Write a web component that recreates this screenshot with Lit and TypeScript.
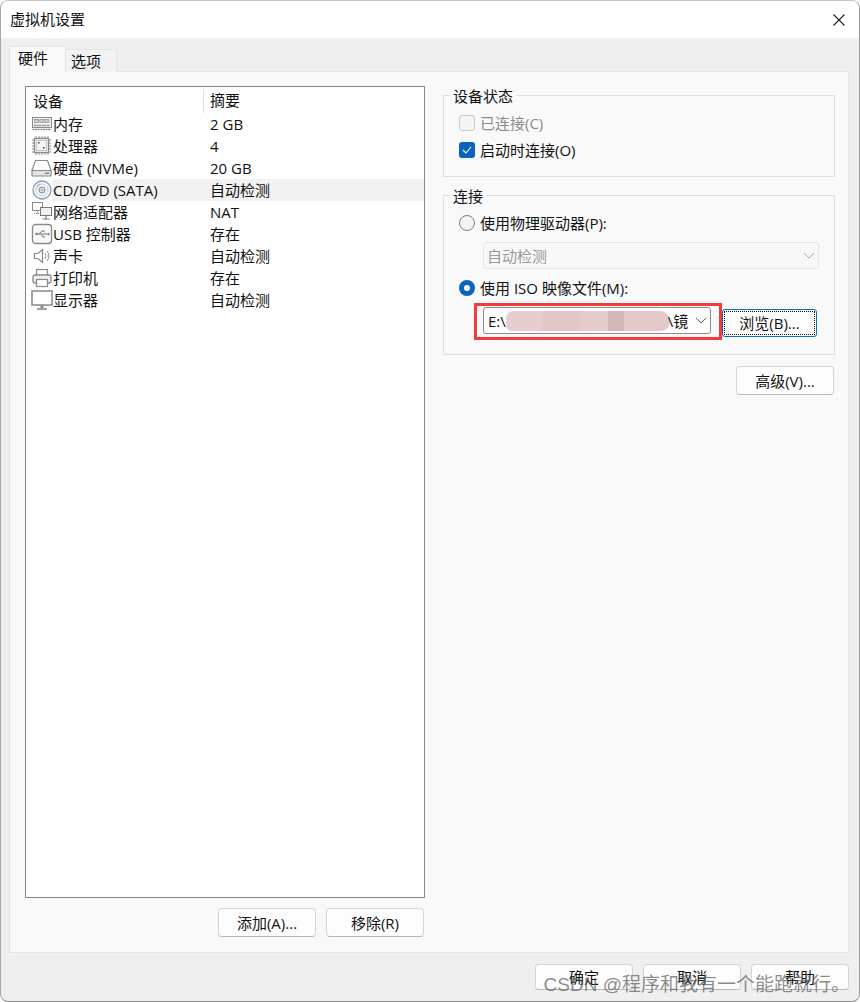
import { LitElement, html, css, svg } from "lit";
import { customElement } from "lit/decorators.js";

const G = "#8a8a8a";
const icons: Record<string, unknown> = {
  mem: svg`<rect x="1.5" y="4.5" width="19" height="10" fill="#f4f4f4" stroke="${G}"/><rect x="3.5" y="6.5" width="4" height="3" fill="#d0d0d0" stroke="${G}" stroke-width=".7"/><rect x="8.8" y="6.5" width="4" height="3" fill="#d0d0d0" stroke="${G}" stroke-width=".7"/><rect x="14" y="6.5" width="4" height="3" fill="#d0d0d0" stroke="${G}" stroke-width=".7"/><path d="M3 12.5h16M1.5 16.5h19" stroke="${G}" stroke-width="1.4" stroke-dasharray="2 .6"/>`,
  cpu: svg`<rect x="3.5" y="3.5" width="14" height="14" fill="#fff" stroke="${G}" stroke-width="1.4"/><rect x="5.5" y="5.5" width="10" height="10" fill="#f4f4f4" stroke="#c4c4c4"/><path d="M1 5h2M1 8h2M1 11h2M1 14h2M1 17h2M18 5h2M18 8h2M18 11h2M18 14h2M18 17h2M5 1v2M8 1v2M11 1v2M14 1v2M17 1v2M5 18v2M8 18v2M11 18v2M14 18v2M17 18v2" stroke="${G}"/><rect x="7" y="7" width="1.6" height="1.6" fill="#555"/><rect x="12" y="12" width="1.6" height="1.6" fill="#555"/>`,
  hdd: svg`<path d="M4.5 3.5h12l3.5 10H1z" fill="#fff" stroke="${G}" stroke-width="1.2"/><rect x="1" y="13.5" width="19" height="5.5" rx=".8" fill="#e4e4e4" stroke="${G}" stroke-width="1.2"/><path d="M14 16.2h4" stroke="#555"/>`,
  cd: svg`<circle cx="11" cy="11" r="9" fill="#f2f5f8" stroke="#7f9db5" stroke-width="1.3"/><circle cx="11" cy="11" r="6" fill="none" stroke="#c5d2dc"/><circle cx="11" cy="11" r="3" fill="#dde4ea" stroke="${G}"/><circle cx="11" cy="11" r="1" fill="#fff" stroke="${G}" stroke-width=".6"/><path d="M6 8a6 6 0 0 1 3-3" stroke="#7f9db5" fill="none"/>`,
  net: svg`<rect x="1.5" y="1.5" width="10" height="8" fill="#fff" stroke="${G}"/><path d="M6.5 9.5v3M3 12.5h6" stroke="${G}" stroke-dasharray="1.2 .8"/><rect x="9.5" y="6.5" width="11" height="8" fill="#f1f1f1" stroke="#777"/><path d="M15 14.5v3M11.5 18h7" stroke="#777" stroke-width="1.2"/>`,
  usb: svg`<rect x="1.5" y="1.5" width="19" height="19" rx="3" fill="#f8f8f8" stroke="${G}" stroke-width="1.3"/><path d="M5 11h12M8 11l3-3h3M10 11l2 3h2" fill="none" stroke="#777"/><path d="M17 9.5l2 1.5-2 1.5z" fill="#777"/><circle cx="5.5" cy="11" r="1.2" fill="#777"/>`,
  snd: svg`<path d="M3.5 8.5h3.5l4.5-4v13l-4.5-4H3.5z" fill="#fff" stroke="${G}" stroke-width="1.2"/><path d="M14 8a4.5 4.5 0 0 1 0 6M16 6a7.5 7.5 0 0 1 0 10" fill="none" stroke="${G}"/>`,
  prn: svg`<rect x="5.5" y="2.5" width="11" height="6" fill="#fff" stroke="${G}" stroke-width="1.2"/><rect x="2" y="8" width="18" height="8" rx="1.5" fill="#f0f0f0" stroke="${G}" stroke-width="1.3"/><rect x="5.5" y="12.5" width="11" height="7" fill="#fff" stroke="${G}" stroke-width="1.2"/>`,
  mon: svg`<rect x="1" y="2" width="20" height="14" fill="#fff" stroke="${G}" stroke-width="1.5"/><path d="M11 16v3" stroke="${G}" stroke-width="3"/><path d="M6 20h10" stroke="${G}" stroke-width="1.6"/>`,
};

const rows: [string, string, string][] = [
  ["mem", "内存", "2 GB"],
  ["cpu", "处理器", "4"],
  ["hdd", "硬盘 (NVMe)", "20 GB"],
  ["cd", "CD/DVD (SATA)", "自动检测"],
  ["net", "网络适配器", "NAT"],
  ["usb", "USB 控制器", "存在"],
  ["snd", "声卡", "自动检测"],
  ["prn", "打印机", "存在"],
  ["mon", "显示器", "自动检测"],
];

const chevron = html`<svg class="chev" width="12" height="7" viewBox="0 0 12 7"><path d="M1 1l5 5 5-5" fill="none" stroke="currentColor"/></svg>`;

@customElement("app-root")
export class AppRoot extends LitElement {
  static styles = css`
    :host {
      display: block;
      width: 860px;
      height: 1002px;
      background: #fff;
      font-family: "Open Sans", "Noto Sans CJK SC", sans-serif;
      font-size: 15px;
      color: #111;
      line-height: 22px;
    }
    .window {
      position: relative;
      box-sizing: border-box;
      height: 1002px;
      width: 860px;
      display: flex;
      flex-direction: column;
      background: #efefef;
      border: 1px solid #a8a8a8;
      border-top-color: #c4c4c4;
      border-bottom-color: #8a8a8a;
      border-right-color: #9a9a9a;
      border-radius: 8px;
      overflow: hidden;
    }
    .title {
      height: 37px;
      flex: none;
      background: #fff;
      display: flex;
      align-items: center;
      justify-content: space-between;
      padding: 0 14px 0 9px;
    }
    .title span { margin-bottom: 2px; }
    .close { display: block; }
    .tabs {
      display: flex;
      align-items: flex-end;
      height: 34px;
      flex: none;
      padding-left: 8px;
      box-sizing: border-box;
      position: relative;
      z-index: 1;
    }
    .tab {
      box-sizing: border-box;
      border: 1px solid #e4e4e4;
      border-bottom: none;
    }
    .tab.on {
      width: 57px;
      height: 26px;
      background: #f9f9f9;
      border-radius: 2px 2px 0 0;
      line-height: 23px;
      padding-left: 8px;
    }
    .tab.off {
      width: 51px;
      height: 23px;
      background: #f2f2f2;
      border-left: none;
      line-height: 22px;
      padding-left: 5px;
    }
    .panel {
      box-sizing: border-box;
      margin: -1px 10px 0 8px;
      height: 882px;
      flex: none;
      background: #f9f9f9;
      border: 1px solid #e4e4e4;
      padding: 14px 13px 0 15px;
      display: grid;
      grid-template-columns: 400px 392px;
      column-gap: 18px;
    }
    .left { display: flex; flex-direction: column; }
    .list {
      box-sizing: border-box;
      height: 812px;
      background: #fff;
      border: 1px solid #85858a;
      padding-top: 2px;
    }
    .head, .row {
      display: grid;
      height: 22px;
      align-items: center;
    }
    .head {
      grid-template-columns: 170px 1fr;
      height: 24px;
      padding-left: 7px;
    }
    .head span:last-child {
      border-left: 1px solid #e2e2e2;
      padding-left: 6px;
      height: 24px;
    }
    .row { grid-template-columns: 184px 1fr; }
    .name {
      display: flex;
      align-items: center;
      height: 22px;
      padding-left: 5px;
    }
    .name svg { width: 22px; height: 22px; flex: none; }
    .name b { font-weight: 400; height: 22px; flex: 1; }
    .val { height: 22px; }
    .row.sel {
      background: linear-gradient(to right, transparent 26px, #f2f2f2 26px);
    }
    .leftbtns {
      display: flex;
      justify-content: flex-end;
      gap: 10px;
      margin: 10px 1px 0 0;
    }
    .btn {
      box-sizing: border-box;
      width: 98px;
      height: 29px;
      background: #fdfdfd;
      border: 1px solid #d4d4d4;
      border-bottom-color: #b8b8b8;
      border-radius: 4px;
      display: flex;
      align-items: center;
      justify-content: center;
    }
    .right { padding-top: 9px; display: flex; flex-direction: column; }
    .group {
      position: relative;
      box-sizing: border-box;
      border: 1px solid #dedede;
    }
    .g1 { height: 82px; padding: 16px 0 0 15px; }
    .g2 { height: 160px; margin-top: 18px; padding: 16px 0 0 15px; }
    .legend {
      position: absolute;
      top: -11px;
      left: 6px;
      background: #f9f9f9;
      padding: 0 3px;
    }
    .check {
      display: flex;
      align-items: center;
      gap: 5px;
      height: 22px;
    }
    .g1 .check + .check { margin-top: 4.5px; }
    .dis { color: #8b8b8b; }
    .box {
      box-sizing: border-box;
      width: 16px;
      height: 16px;
      border-radius: 3px;
      flex: none;
      display: flex;
      align-items: center;
      justify-content: center;
    }
    .box.empty { border: 1px solid #c8c8c8; background: #f5f5f5; }
    .box.on { background: #0a63bd; }
    .radio {
      box-sizing: border-box;
      width: 16px;
      height: 16px;
      border-radius: 50%;
      flex: none;
    }
    .radio.off { border: 1px solid #7f7f7f; background: #f3f3f3; }
    .radio.on { border: 5px solid #0a63bd; background: #fff; }
    .drop {
      box-sizing: border-box;
      margin: 8px 0 0 24px;
      width: 336px;
      height: 27px;
      border: 1px solid #e6e6e6;
      background: #f8f8f8;
      border-radius: 3px;
      color: #9a9a9a;
      padding: 0 3px 0 3px;
      display: flex;
      align-items: center;
      justify-content: space-between;
    }
    .g2 .mt { margin-top: 8px; }
    .isoline {
      display: flex;
      align-items: flex-start;
      margin: 8px 0 0 24px;
    }
    .combo {
      box-sizing: border-box;
      width: 228px;
      height: 27px;
      flex: none;
      background: #fdfdfd;
      border: 1px solid #8c8c8c;
      border-radius: 3px;
      padding: 0 3px 0 4px;
      display: flex;
      align-items: center;
      justify-content: space-between;
      white-space: nowrap;
    }
    .combo .chev { color: #666; }
    .drop .chev { color: #aaa; }
    .path { display: flex; align-items: center; }
    .smudge {
      display: inline-block;
      width: 164px;
      height: 20px;
      margin: 0 -2px 0 0;
      border-radius: 8px 10px 9px 6px;
      background: linear-gradient(to right, #e7cdcd 0 22%, #e3c7c7 22% 45%, #e6cbcb 45% 62%, #d4b8b8 62% 72%, #e5c9c9 72% 100%);
    }
    .browse {
      box-sizing: border-box;
      margin: 2px 0 0 11px;
      width: 95px;
      height: 28px;
      background: #fdfdfd;
      border: 1px solid #0a6cc4;
      border-radius: 3px;
      outline: 1px dotted #111;
      outline-offset: -3px;
      display: flex;
      align-items: center;
      justify-content: center;
    }
    .adv { align-self: flex-end; margin-top: 11px; margin-right: 1px; }
    .foot {
      display: flex;
      justify-content: flex-end;
      gap: 10px;
      padding: 11px 10px 0 0;
    }
    .foot .btn { height: 26px; }
    .hl {
      position: absolute;
      left: 473px;
      top: 302px;
      width: 248px;
      height: 37px;
      box-sizing: border-box;
      border: 3px solid #f23c3c;
      pointer-events: none;
    }
    .mark {
      position: absolute;
      right: 9px;
      bottom: 3px;
      font-size: 19px;
      line-height: 26px;
      color: rgba(95, 95, 95, 0.72);
      font-family: "Liberation Sans", "Noto Sans CJK SC", sans-serif;
      white-space: nowrap;
    }
  `;

  render() {
    return html`<div class="window">
      <div class="title">
        <span>虚拟机设置</span>
        <svg class="close" width="12" height="12" viewBox="0 0 12 12"><path d="M.5.5l11 11M11.5.5l-11 11" stroke="#222" stroke-width="1.1"/></svg>
      </div>
      <div class="tabs">
        <div class="tab on">硬件</div>
        <div class="tab off">选项</div>
      </div>
      <div class="panel">
        <div class="left">
          <div class="list">
            <div class="head"><span>设备</span><span>摘要</span></div>
            ${rows.map(
              ([ic, n, v]) => html`<div class="row ${ic === "cd" ? "sel" : ""}">
                <div class="name"><svg viewBox="0 0 22 22">${icons[ic]}</svg><b>${n}</b></div>
                <div class="val">${v}</div>
              </div>`
            )}
          </div>
          <div class="leftbtns">
            <div class="btn">添加(A)...</div>
            <div class="btn">移除(R)</div>
          </div>
        </div>
        <div class="right">
          <div class="group g1">
            <div class="legend">设备状态</div>
            <div class="check dis"><span class="box empty"></span>已连接(C)</div>
            <div class="check">
              <span class="box on"><svg width="10" height="8" viewBox="0 0 10 8"><path d="M1 4l3 3 5-6" fill="none" stroke="#fff" stroke-width="1.1"/></svg></span>启动时连接(O)
            </div>
          </div>
          <div class="group g2">
            <div class="legend">连接</div>
            <div class="check"><span class="radio off"></span>使用物理驱动器(P):</div>
            <div class="drop"><span>自动检测</span>${chevron}</div>
            <div class="check mt"><span class="radio on"></span>使用 ISO 映像文件(M):</div>
            <div class="isoline">
              <div class="combo">
                <span class="path">E:\\<span class="smudge"></span>\\镜</span>${chevron}
              </div>
              <div class="browse">浏览(B)...</div>
            </div>
          </div>
          <div class="btn adv">高级(V)...</div>
        </div>
      </div>
      <div class="foot">
        <div class="btn">确定</div>
        <div class="btn">取消</div>
        <div class="btn">帮助</div>
      </div>
      <div class="hl"></div>
      <div class="mark">CSDN @程序和我有一个能跑就行。</div>
    </div>`;
  }
}
